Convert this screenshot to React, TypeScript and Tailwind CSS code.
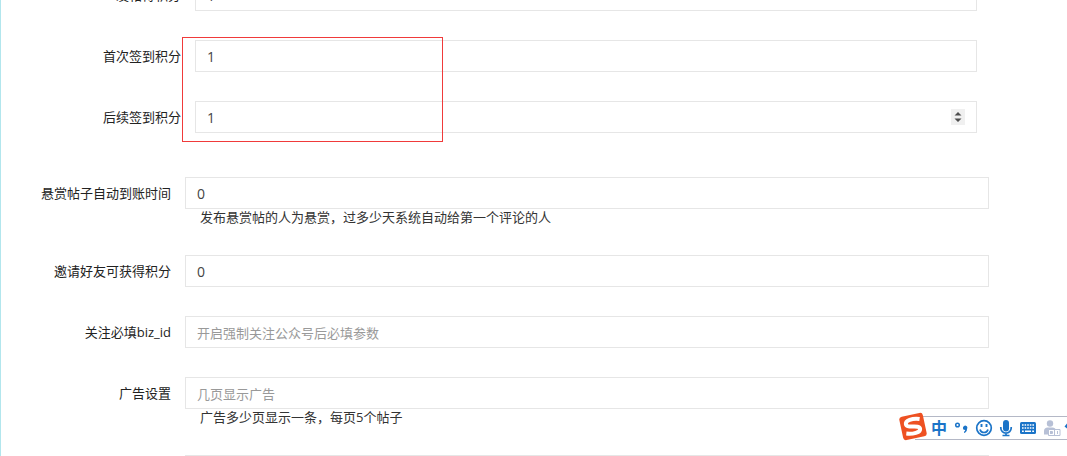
import React from "react";

type FieldProps = {
  id: string;
  label: string;
  type?: "text" | "number";
  value?: string;
  placeholder?: string;
  hint?: string;
  spinner?: boolean;
};

function Spinner() {
  return (
    <span className="absolute top-2 right-3 flex h-4 w-[14px] items-center justify-center bg-[#f0f0f0]">
      <svg width="8" height="10" viewBox="0 0 8 10" fill="#4d4d4d" aria-hidden="true">
        <path d="M0.500 3.500L4 0l3.500 3.500zM0.500 6.500L4 10l3.500-3.500z" />
      </svg>
    </span>
  );
}

function Field({ id, label, type = "text", value, placeholder, hint, spinner }: FieldProps) {
  return (
    <div className="flex">
      <label htmlFor={id} className="w-[170px] shrink-0 text-right text-[13px] leading-8 text-[#222]">
        {label}
      </label>
      <div className="ml-[14px] min-w-0 flex-1">
        <div className="relative">
          <input
            id={id}
            type={type}
            defaultValue={value}
            placeholder={placeholder}
            className="block h-8 w-full appearance-none border border-[#e6e6e6] bg-white px-[11px] text-sm text-[#444] outline-none [-moz-appearance:textfield] placeholder:text-[13px] placeholder:text-[#999] [&::-webkit-inner-spin-button]:appearance-none"
          />
          {spinner && <Spinner />}
        </div>
        {hint && <p className="ml-[15px] h-[17px] text-[13px] leading-[17px] text-[#333]">{hint}</p>}
      </div>
    </div>
  );
}

function ImeBar() {
  return (
    <div className="absolute top-[412px] right-0 h-8 w-[168px]">
      <div className="mt-1 ml-4 flex h-6 items-center border-y border-[#b4b8c6] bg-white pl-4 text-base leading-none font-bold text-[#1b74c8]">
        中
      </div>
      <svg className="absolute inset-0" width="168" height="32" viewBox="0 0 168 32" aria-hidden="true">
        <g transform="rotate(-12 14 14.500)">
          <rect x="2" y="2.500" width="24" height="24" rx="3" fill="#ee5122" />
          <path
            d="M22 8.500C15 6 7.500 7 7.500 11C7.500 15.500 20.500 13.500 20.500 18C20.500 22 12 22 6 20"
            fill="none"
            stroke="#fff"
            strokeWidth="4"
          />
        </g>
        <g fill="none" stroke="#1b74c8">
          <circle cx="58.500" cy="13" r="1.800" strokeWidth="1.500" />
          <circle cx="85" cy="16" r="7.300" strokeWidth="1.700" />
          <path d="M81 17.500c1 4 7 4 8 0" strokeWidth="1.700" />
          <path d="M82.500 12v3M87.500 12v3" strokeWidth="1.900" />
          <path d="M101.800 15v1a5.200 5.200 0 0 0 10.400 0v-1M107 21v3M103.500 23.500h7" strokeWidth="1.700" />
        </g>
        <g fill="#1b74c8">
          <path d="M64 15.500a2.200 2.200 0 1 1 4 1.500c0 2-1 3.500-3 4v-1.300c.8-.3 1.200-.9 1.200-1.700a2.200 2.200 0 0 1-2.200-2.500z" />
          <rect x="104" y="8" width="6" height="11.500" rx="3" />
          <rect x="121" y="10" width="16" height="12" rx="1.500" />
          <path d="M165.500 14.500l2.500-3v5z" />
        </g>
        <g fill="none" stroke="#fff" strokeWidth="1.600">
          <path d="M123 13h12M123 16h12" strokeDasharray="1.600 1" />
          <path d="M123 19.200h1.800M126 19.200h6M133.200 19.200h1.800" />
        </g>
        <g fill="#b7c0d6">
          <circle cx="151" cy="11.500" r="3.200" />
          <path d="M145 22.500v-3.500c0-2 1.500-3.500 3.500-3.500h5c2 0 3 1 3 2v5z" />
          <path d="M149.500 17.500h11.500v6h-11.500z" fill="#fff" stroke="#b7c0d6" />
          <path d="M151 19.500h2.500v2h-2.500M151 20.500h2.500M155.500 18v5M158.500 19v3" fill="none" stroke="#b7c0d6" />
        </g>
      </svg>
    </div>
  );
}

export default function App() {
  return (
    <main className="relative h-screen overflow-hidden border-l border-[#b2e6ed] bg-white font-['Open_Sans','Noto_Sans_CJK_SC',sans-serif]">
      <form className="-mt-[21px] pr-[78px]">
        <section className="relative flex flex-col gap-[29px] pr-3 pl-[10px]">
          <Field id="post" label="发帖得积分" type="number" value="1" />
          <Field id="first" label="首次签到积分" type="number" value="1" />
          <Field id="next" label="后续签到积分" type="number" value="1" spinner />
          <div className="pointer-events-none absolute top-[58px] left-[181px] h-[105px] w-[261px] border border-[#f03a3a]" />
        </section>
        <section className="mt-11 flex flex-col gap-[29px]">
          <Field
            id="reward"
            label="悬赏帖子自动到账时间"
            value="0"
            hint="发布悬赏帖的人为悬赏，过多少天系统自动给第一个评论的人"
          />
          <Field id="invite" label="邀请好友可获得积分" value="0" />
          <Field id="biz" label="关注必填biz_id" placeholder="开启强制关注公众号后必填参数" />
          <Field id="ads" label="广告设置" placeholder="几页显示广告" hint="广告多少页显示一条，每页5个帖子" />
          <Field id="more" label="" />
        </section>
      </form>
      <ImeBar />
    </main>
  );
}
